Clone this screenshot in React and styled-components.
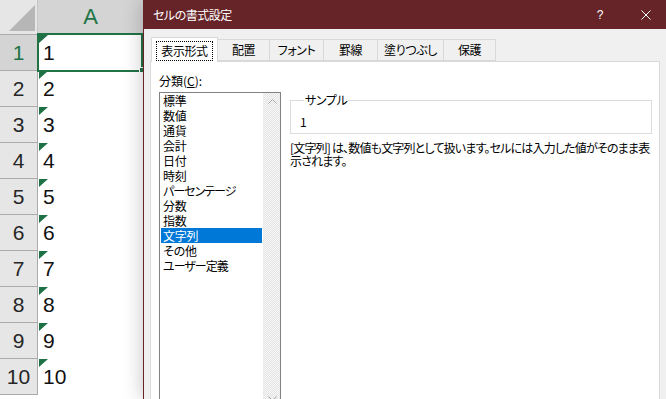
import React from "react";
import styled, { createGlobalStyle } from "styled-components";

const GlobalStyle = createGlobalStyle`
  html, body { margin: 0; padding: 0; background: #fff; }
  body { overflow: hidden; }
  * { box-sizing: border-box; }
`;

const Page = styled.div`
  display: flex;
  width: 666px;
  height: 399px;
  overflow: hidden;
`;

/* ---------- spreadsheet ---------- */
const Sheet = styled.div`
  flex: none;
  width: 143px;
  display: grid;
  grid-template-columns: 38px 105px;
  grid-template-rows: 35px repeat(10, 36px);
  align-content: start;
  font-family: "Liberation Sans", Arial, sans-serif;
  font-size: 21px;
  background: #fff;
`;

const Corner = styled.div`
  background: #e6e6e6;
  border-right: 1px solid #c8c8c8;
  border-bottom: 1px solid #ababab;
  display: flex;
  align-items: flex-end;
  justify-content: flex-end;
  padding: 0 2px 3px 0;
`;

const ColHeader = styled.div`
  background: #d4d4d4;
  color: #217346;
  border-bottom: 1px solid #ababab;
  display: flex;
  align-items: center;
  justify-content: center;
  font-size: 22px;
`;

const RowHeader = styled.div`
  background: ${(p) => (p.$selected ? "#d4d4d4" : "#e6e6e6")};
  color: ${(p) => (p.$selected ? "#217346" : "#262626")};
  border-right: 1px solid #ababab;
  border-bottom: 1px solid #ababab;
  display: flex;
  align-items: center;
  justify-content: center;
`;

const Cell = styled.div`
  position: relative;
  display: flex;
  align-items: center;
  padding-left: 5px;
  color: #111;
  &::before {
    content: "";
    position: absolute;
    left: 1px;
    top: 0;
    width: 9px;
    height: 8px;
    background: #1e7145;
    clip-path: polygon(0 0, 100% 0, 0 100%);
  }
`;

const Selection = styled.span`
  position: absolute;
  left: -1px;
  right: 0;
  top: -2px;
  bottom: -1px;
  border: 2px solid #217346;
  z-index: 1;
`;

const FillHandle = styled.span`
  position: absolute;
  left: 101px;
  top: 32px;
  width: 6px;
  height: 6px;
  background: #217346;
  border: 1px solid #fff;
  z-index: 2;
`;

/* ---------- dialog ---------- */
const Dialog = styled.div`
  position: relative;
  z-index: 3;
  flex: 1;
  min-width: 0;
  height: 399px;
  overflow: hidden;
  background: #f0f0f0;
  border-left: 1px solid #662428;
  box-shadow: -2px 0 18px rgba(0, 0, 0, 0.2);
  display: flex;
  flex-direction: column;
  font-family: "Noto Sans CJK JP", "Noto Sans", sans-serif;
  font-feature-settings: "palt";
  font-size: 12px;
  letter-spacing: -0.4px;
  color: #000;
`;

const TitleBar = styled.div`
  flex: none;
  height: 29px;
  background: #662428;
  color: #fff;
  display: flex;
  align-items: center;
  padding: 0 15px 0 9px;
`;

const Title = styled.div`
  flex: 1;
  line-height: 14px;
  letter-spacing: -0.5px;
`;

const Help = styled.span`
  line-height: 14px;
  margin-right: 38px;
  font-family: "Liberation Sans", Arial, sans-serif;
  font-size: 12px;
`;

const TabStrip = styled.div`
  flex: none;
  display: flex;
  align-items: flex-end;
  height: 24px;
  margin-top: 8px;
  padding-left: 7px;
  position: relative;
  z-index: 2;
`;

const Tab = styled.div`
  width: ${(p) => p.$w}px;
  height: ${(p) => (p.$active ? 25 : 22)}px;
  margin-left: ${(p) => (p.$first ? 0 : -1)}px;
  margin-bottom: ${(p) => (p.$active ? -1 : 0)}px;
  border: 1px solid #d9d9d9;
  border-bottom: ${(p) => (p.$active ? "none" : "1px solid #d9d9d9")};
  background: ${(p) => (p.$active ? "#fff" : "#f0f0f0")};
  position: relative;
  z-index: ${(p) => (p.$active ? 2 : 1)};
  display: flex;
  align-items: center;
  justify-content: center;
  padding-top: ${(p) => (p.$active ? 1 : 0)}px;
  line-height: 14px;
  white-space: nowrap;
`;

const FocusLabel = styled.span`
  display: block;
  padding: 2px 4px;
  border: 1px dotted #000;
  line-height: 14px;
`;

const Panel = styled.div`
  flex: none;
  height: 360px;
  margin: 0 6px;
  background: #fff;
  border: 1px solid #d9d9d9;
  display: flex;
  gap: 9px;
  padding: 12px 7px 0 8px;
`;

const LeftCol = styled.div`
  flex: none;
  width: 122px;
  display: flex;
  flex-direction: column;
`;

const FieldLabel = styled.div`
  line-height: 14px;
  margin-bottom: 4px;
  letter-spacing: 0;
  u { text-decoration: underline; text-underline-offset: 1px; }
`;

const ListBox = styled.div`
  height: 316px;
  border: 1px solid #828282;
  display: flex;
`;

const Items = styled.div`
  flex: 1;
  padding: 0 1px;
`;

const Item = styled.div`
  height: 15px;
  line-height: 15px;
  padding-left: 2px;
  white-space: nowrap;
  letter-spacing: ${(p) => (p.$kana ? "-1px" : "-0.2px")};
  background: ${(p) => (p.$selected ? "#0078d7" : "transparent")};
  color: ${(p) => (p.$selected ? "#fff" : "#000")};
`;

const ScrollBar = styled.div`
  flex: none;
  width: 17px;
  display: flex;
  flex-direction: column;
  justify-content: space-between;
  background: repeating-conic-gradient(#e4e4e4 0% 25%, #f7f7f7 0% 50%) 0 0 / 2px 2px;
`;

const ArrowBtn = styled.div`
  height: 17px;
  display: flex;
  align-items: center;
  justify-content: center;
  padding-left: 2px;
`;

const RightCol = styled.div`
  flex: 1;
  min-width: 0;
  display: flex;
  flex-direction: column;
  padding-top: 19px;
`;

const Group = styled.fieldset`
  margin: 0;
  padding: 8px 8px 4px;
  border: 1px solid #dcdcdc;
  min-width: 0;
`;

const Legend = styled.legend`
  padding: 0 1px;
  margin-left: 5px;
  line-height: 14px;
`;

const SampleValue = styled.div`
  line-height: 14px;
  padding-left: 1px;
`;

const Description = styled.p`
  margin: 8px 0 0;
  line-height: 12.5px;
  white-space: nowrap;
  letter-spacing: -0.82px;
`;

const categories = [
  { t: "標準" },
  { t: "数値" },
  { t: "通貨" },
  { t: "会計" },
  { t: "日付" },
  { t: "時刻" },
  { t: "パーセンテージ", kana: true },
  { t: "分数" },
  { t: "指数" },
  { t: "文字列" },
  { t: "その他" },
  { t: "ユーザー定義", kana: true },
];

const tabs = [
  { label: "表示形式", w: 67 },
  { label: "配置", w: 53 },
  { label: "フォント", w: 55 },
  { label: "罫線", w: 55 },
  { label: "塗りつぶし", w: 67 },
  { label: "保護", w: 53 },
];

export default function App() {
  const rows = Array.from({ length: 10 }, (_, i) => i + 1);
  return (
    <>
      <GlobalStyle />
      <Page>
        <Sheet>
          <Corner>
            <svg width="26" height="26" viewBox="0 0 26 26">
              <polygon points="26,0 0,26 26,26" fill="#b6b6b6" />
            </svg>
          </Corner>
          <ColHeader>A</ColHeader>
          {rows.map((n) => (
            <React.Fragment key={n}>
              <RowHeader $selected={n === 1}>{n}</RowHeader>
              <Cell>
                {n}
                {n === 1 && (
                  <>
                    <Selection />
                    <FillHandle />
                  </>
                )}
              </Cell>
            </React.Fragment>
          ))}
        </Sheet>

        <Dialog>
          <TitleBar>
            <Title>セルの書式設定</Title>
            <Help>?</Help>
            <svg width="10" height="10" viewBox="0 0 10 10">
              <path d="M0.5 0.5 L9.5 9.5 M9.5 0.5 L0.5 9.5" stroke="#fff" strokeWidth="1" />
            </svg>
          </TitleBar>

          <TabStrip>
            {tabs.map((t, i) => (
              <Tab key={t.label} $w={t.w} $active={i === 0} $first={i === 0}>
                {i === 0 ? <FocusLabel>{t.label}</FocusLabel> : t.label}
              </Tab>
            ))}
          </TabStrip>

          <Panel>
            <LeftCol>
              <FieldLabel>
                分類(<u>C</u>):
              </FieldLabel>
              <ListBox>
                <Items>
                  {categories.map((c) => (
                    <Item key={c.t} $kana={c.kana} $selected={c.t === "文字列"}>
                      {c.t}
                    </Item>
                  ))}
                </Items>
                <ScrollBar>
                  <ArrowBtn>
                    <svg width="9" height="5" viewBox="0 0 9 5">
                      <polyline points="0.5,4.5 4.5,0.5 8.5,4.5" fill="none" stroke="#a6a6a6" strokeWidth="1" />
                    </svg>
                  </ArrowBtn>
                  <ArrowBtn>
                    <svg width="9" height="5" viewBox="0 0 9 5">
                      <polyline points="0.5,0.5 4.5,4.5 8.5,0.5" fill="none" stroke="#a6a6a6" strokeWidth="1" />
                    </svg>
                  </ArrowBtn>
                </ScrollBar>
              </ListBox>
            </LeftCol>

            <RightCol>
              <Group>
                <Legend>サンプル</Legend>
                <SampleValue>1</SampleValue>
              </Group>
              <Description>
                [文字列] は、数値も文字列として扱います。セルには入力した値がそのまま表
                <br />
                示されます。
              </Description>
            </RightCol>
          </Panel>
        </Dialog>
      </Page>
    </>
  );
}
